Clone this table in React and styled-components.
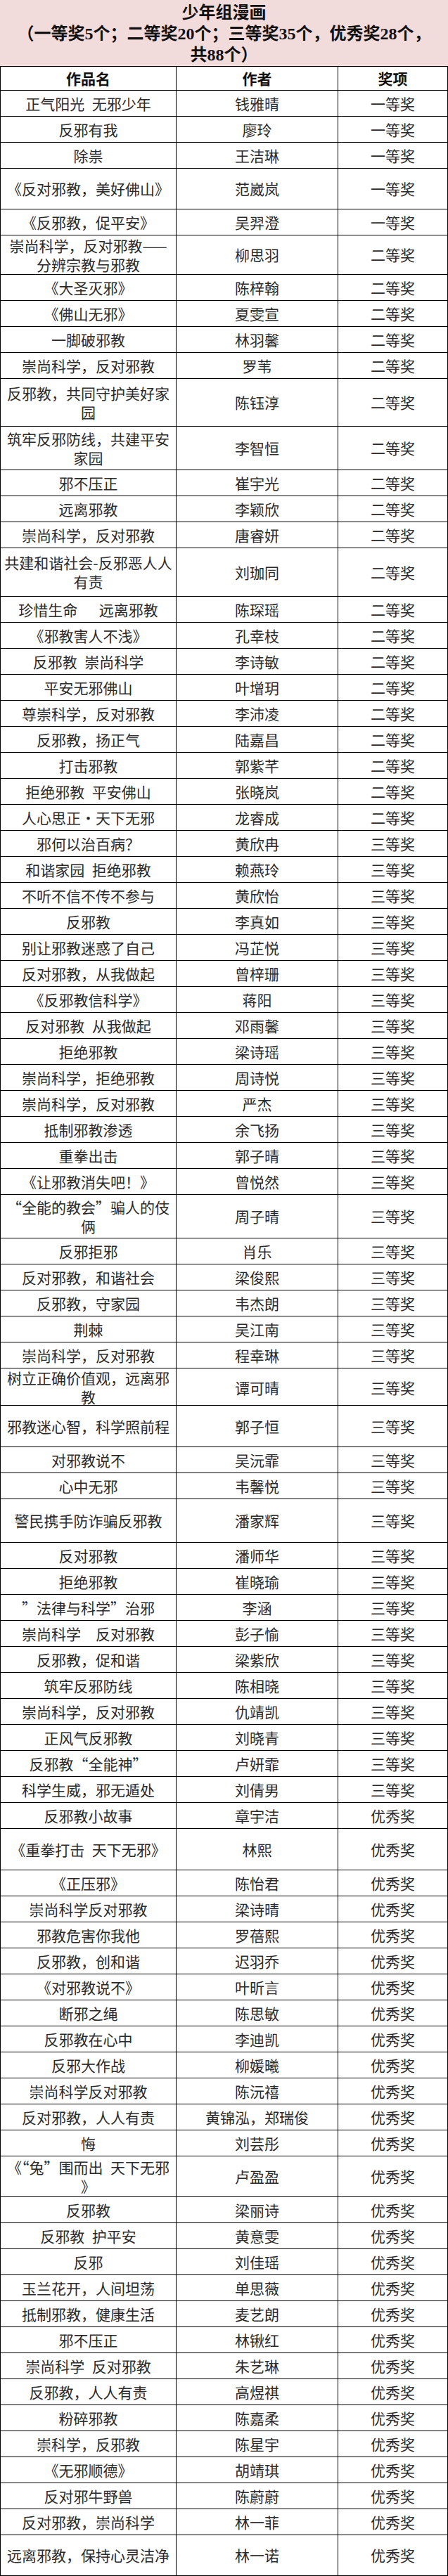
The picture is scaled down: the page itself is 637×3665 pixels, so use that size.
import React from 'react'
import styled, { createGlobalStyle } from 'styled-components'

const GlobalStyle = createGlobalStyle`
  * {
    box-sizing: border-box;
  }
  body {
    margin: 0;
    background: #fff;
  }
`

const Page = styled.div`
  width: 637px;
  font-family: "Noto Sans CJK SC", sans-serif;
  color: #2a2a2a;
`

const Title = styled.div`
  height: 94px;
  padding-top: 3px;
  background: #f2dcdb;
  text-align: center;
  font-family: "Liberation Serif", "Noto Sans CJK SC", serif;
  font-weight: bold;
  font-size: 24px;
  line-height: 30px;
  color: #111;
`

const Table = styled.div`
  border-top: 1px solid #000;
  border-left: 1px solid #000;
`

const Row = styled.div`
  display: grid;
  grid-template-columns: 250px 230px 1fr;
  height: ${p => p.$h}px;
  border-bottom: 1px solid #000;
`

const Cell = styled.div`
  display: flex;
  align-items: center;
  justify-content: center;
  border-right: 1px solid #000;
  text-align: center;
  white-space: pre;
  font-size: 21px;
  line-height: 27px;
  font-weight: ${p => p.$head ? 700 : 400};
  color: ${p => p.$head ? '#111' : '#2a2a2a'};
`

const S = '\u2002'

// [作品名, 作者, 奖项, 行高]
const rows = [
  [`正气阳光${S}无邪少年`, '钱雅晴', '一等奖'],
  ['反邪有我', '廖玲', '一等奖'],
  ['除祟', '王洁琳', '一等奖'],
  ['《反对邪教，美好佛山》', '范崴岚', '一等奖', 58],
  ['《反邪教，促平安》', '吴羿澄', '一等奖'],
  ['崇尚科学，反对邪教——\n分辨宗教与邪教', '柳思羽', '二等奖', 56],
  ['《大圣灭邪》', '陈梓翰', '二等奖'],
  ['《佛山无邪》', '夏雯宣', '二等奖'],
  ['一脚破邪教', '林羽馨', '二等奖'],
  ['崇尚科学，反对邪教', '罗苇', '二等奖'],
  ['反邪教，共同守护美好家\n园', '陈钰淳', '二等奖', 68],
  ['筑牢反邪防线，共建平安\n家园', '李智恒', '二等奖', 62],
  ['邪不压正', '崔宇光', '二等奖'],
  ['远离邪教', '李颖欣', '二等奖'],
  ['崇尚科学，反对邪教', '唐睿妍', '二等奖'],
  ['共建和谐社会-反邪恶人人\n有责', '刘珈同', '二等奖', 69],
  ['珍惜生命\u3000\u00a0\u00a0远离邪教', '陈琛瑶', '二等奖'],
  ['《邪教害人不浅》', '孔幸枝', '二等奖'],
  [`反邪教${S}崇尚科学`, '李诗敏', '二等奖'],
  ['平安无邪佛山', '叶增玥', '二等奖'],
  ['尊崇科学，反对邪教', '李沛凌', '二等奖'],
  ['反邪教，扬正气', '陆嘉昌', '二等奖'],
  ['打击邪教', '郭紫芊', '二等奖'],
  [`拒绝邪教${S}平安佛山`, '张晓岚', '二等奖'],
  ['人心思正·天下无邪', '龙睿成', '二等奖'],
  ['邪何以治百病？', '黄欣冉', '三等奖'],
  [`和谐家园${S}拒绝邪教`, '赖燕玲', '三等奖'],
  ['不听不信不传不参与', '黄欣怡', '三等奖'],
  ['反邪教', '李真如', '三等奖'],
  ['别让邪教迷惑了自己', '冯芷悦', '三等奖'],
  ['反对邪教，从我做起', '曾梓珊', '三等奖'],
  ['《反邪教信科学》', '蒋阳', '三等奖'],
  [`反对邪教${S}从我做起`, '邓雨馨', '三等奖'],
  ['拒绝邪教', '梁诗瑶', '三等奖'],
  ['崇尚科学，拒绝邪教', '周诗悦', '三等奖'],
  ['崇尚科学，反对邪教', '严杰', '三等奖'],
  ['抵制邪教渗透', '余飞扬', '三等奖'],
  ['重拳出击', '郭子晴', '三等奖'],
  ['《让邪教消失吧！》', '曾悦然', '三等奖'],
  ['“全能的教会”骗人的伎\n俩', '周子晴', '三等奖', 62],
  ['反邪拒邪', '肖乐', '三等奖'],
  ['反对邪教，和谐社会', '梁俊熙', '三等奖'],
  ['反邪教，守家园', '韦杰朗', '三等奖'],
  ['荆棘', '吴江南', '三等奖'],
  ['崇尚科学，反对邪教', '程幸琳', '三等奖'],
  ['树立正确价值观，远离邪\n教', '谭可晴', '三等奖', 53],
  ['邪教迷心智，科学照前程', '郭子恒', '三等奖', 59],
  ['对邪教说不', '吴沅霏', '三等奖'],
  ['心中无邪', '韦馨悦', '三等奖'],
  ['警民携手防诈骗反邪教', '潘家辉', '三等奖', 62],
  ['反对邪教', '潘师华', '三等奖'],
  ['拒绝邪教', '崔晓瑜', '三等奖'],
  ['”法律与科学”治邪', '李涵', '三等奖'],
  ['崇尚科学\u3000反对邪教', '彭子愉', '三等奖'],
  ['反邪教，促和谐', '梁紫欣', '三等奖'],
  ['筑牢反邪防线', '陈相晓', '三等奖'],
  ['崇尚科学，反对邪教', '仇靖凯', '三等奖'],
  ['正风气反邪教', '刘晓青', '三等奖'],
  ['反邪教“全能神”', '卢妍霏', '三等奖'],
  ['科学生威，邪无遁处', '刘倩男', '三等奖'],
  ['反邪教小故事', '章宇洁', '优秀奖'],
  [`《重拳打击${S}天下无邪》`, '林熙', '优秀奖', 59],
  ['《正压邪》', '陈怡君', '优秀奖'],
  ['崇尚科学反对邪教', '梁诗晴', '优秀奖'],
  ['邪教危害你我他', '罗蓓熙', '优秀奖'],
  ['反邪教，创和谐', '迟羽乔', '优秀奖'],
  ['《对邪教说不》', '叶昕言', '优秀奖'],
  ['断邪之绳', '陈思敏', '优秀奖'],
  ['反邪教在心中', '李迪凯', '优秀奖'],
  ['反邪大作战', '柳媛曦', '优秀奖'],
  ['崇尚科学反对邪教', '陈沅禧', '优秀奖'],
  ['反对邪教，人人有责', '黄锦泓，郑瑞俊', '优秀奖'],
  ['悔', '刘芸彤', '优秀奖'],
  [`《“兔”围而出${S}天下无邪\n》`, '卢盈盈', '优秀奖', 58],
  ['反邪教', '梁丽诗', '优秀奖'],
  [`反邪教${S}护平安`, '黄意雯', '优秀奖'],
  ['反邪', '刘佳瑶', '优秀奖'],
  ['玉兰花开，人间坦荡', '单思薇', '优秀奖'],
  ['抵制邪教，健康生活', '麦艺朗', '优秀奖'],
  ['邪不压正', '林锹红', '优秀奖'],
  [`崇尚科学${S}反对邪教`, '朱艺琳', '优秀奖'],
  ['反邪教，人人有责', '高煜祺', '优秀奖'],
  ['粉碎邪教', '陈嘉柔', '优秀奖'],
  ['崇科学，反邪教', '陈星宇', '优秀奖'],
  ['《无邪顺德》', '胡靖琪', '优秀奖'],
  ['反对邪牛野兽', '陈蔚蔚', '优秀奖'],
  ['反对邪教，崇尚科学', '林一菲', '优秀奖'],
  ['远离邪教，保持心灵洁净', '林一诺', '优秀奖', 58],
]

export default function App() {
  return (
    <Page>
      <GlobalStyle />
      <Title>
        少年组漫画<br />
        （一等奖5个；二等奖20个；三等奖35个，优秀奖28个，<br />
        共88个）
      </Title>
      <Table>
        <Row $h={34}>
          <Cell $head>作品名</Cell>
          <Cell $head>作者</Cell>
          <Cell $head>奖项</Cell>
        </Row>
        {rows.map(([name, author, award, h], i) => (
          <Row key={i} $h={h || 37}>
            <Cell>{name}</Cell>
            <Cell>{author}</Cell>
            <Cell>{award}</Cell>
          </Row>
        ))}
      </Table>
    </Page>
  )
}
